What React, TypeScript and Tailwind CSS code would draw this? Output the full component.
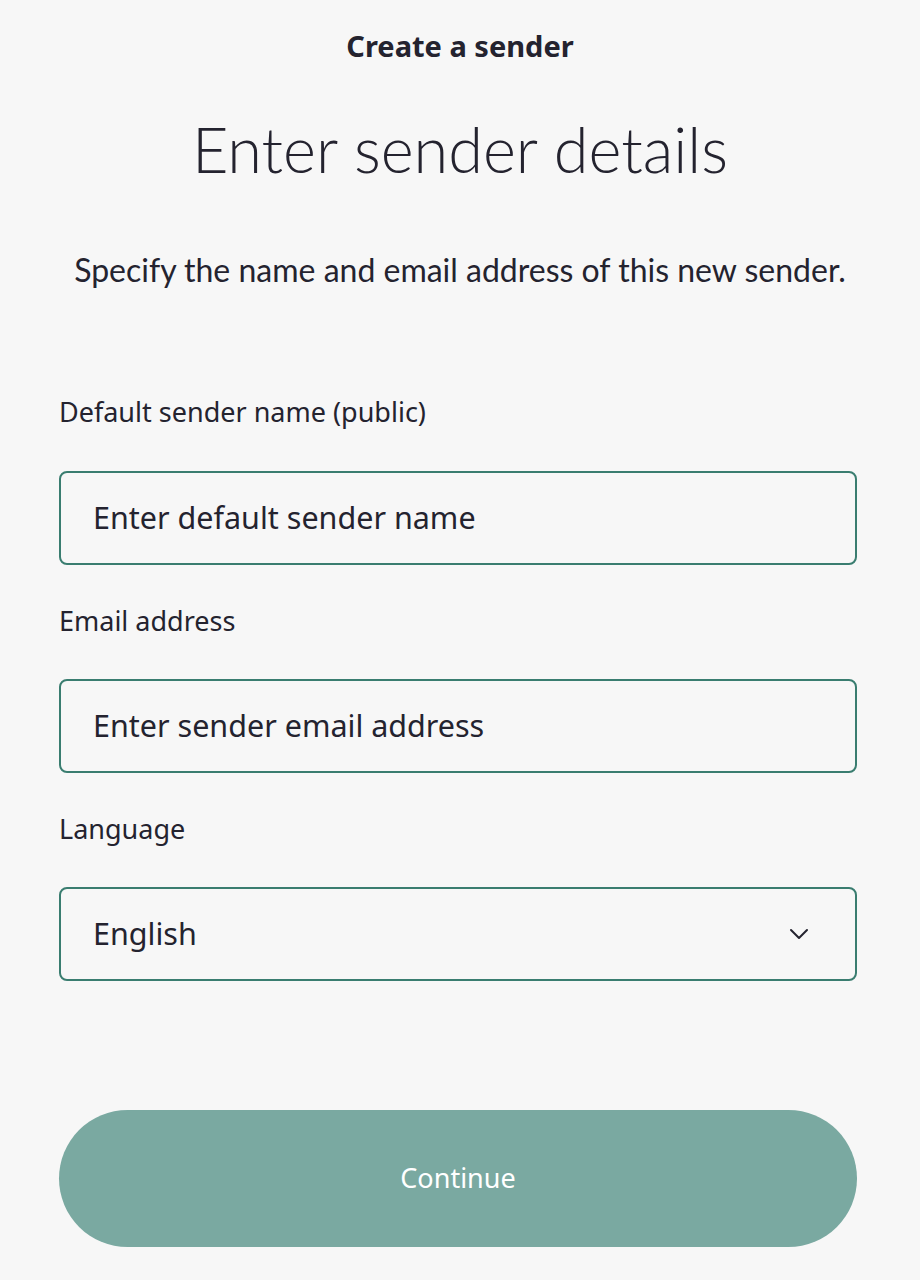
import React from "react";

export default function App() {
  return (
    <div className="min-h-[1280px] w-full bg-[#f7f7f7] text-[#24232f]" style={{ fontFamily: "Lato, 'Noto Sans', sans-serif" }}>
      <div className="flex flex-col items-center pt-[28px]">
        <div className="text-[29px] font-bold leading-[36px] text-[#24232f]" style={{ fontFamily: "'Noto Sans', sans-serif" }}>Create a sender</div>
        <h1 className="mt-[49px] text-[63px] font-light leading-[72px]">Enter sender details</h1>
        <p className="mt-[65px] text-[32px] leading-[40px]">Specify the name and email address of this new sender.</p>
      </div>
      <div className="ml-[59px] mr-[63px] mt-[105px] flex flex-col" style={{ fontFamily: "'Noto Sans', sans-serif" }}>
        <label className="text-[27px] leading-[34px]">Default sender name (public)</label>
        <div className="mt-[42px] flex h-[94px] items-center rounded-[8px] border-2 border-[#3a7d70] px-[32px] text-[30.5px]">
          Enter default sender name
        </div>
        <label className="mt-[39px] text-[27px] leading-[34px]">Email address</label>
        <div className="mt-[41px] flex h-[94px] items-center rounded-[8px] border-2 border-[#3a7d70] px-[32px] text-[30.5px]">
          Enter sender email address
        </div>
        <label className="mt-[39px] text-[27px] leading-[34px]">Language</label>
        <div className="mt-[41px] flex h-[94px] items-center justify-between rounded-[8px] border-2 border-[#3a7d70] pl-[32px] pr-[46px] text-[30.5px]">
          <span>English</span>
          <svg width="20" height="12" viewBox="0 0 20 12" fill="none">
            <path d="M2 2l8 8 8-8" stroke="#24232f" strokeWidth="2" strokeLinecap="round" strokeLinejoin="round" />
          </svg>
        </div>
        <button className="mt-[129px] flex h-[137px] w-full items-center justify-center rounded-full bg-[#7aa9a1] text-[27px] text-white">
          Continue
        </button>
      </div>
    </div>
  );
}
